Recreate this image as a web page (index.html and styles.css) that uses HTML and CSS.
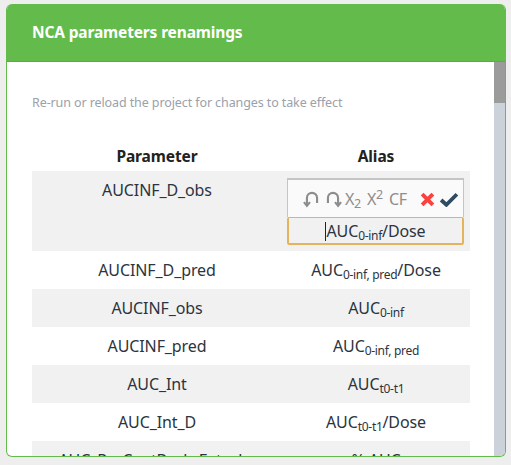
FILE: index.html
```html
<!DOCTYPE html>
<html lang="en">
<head>
<meta charset="utf-8">
<title>NCA parameters renamings</title>
<link rel="stylesheet" href="styles.css">
</head>
<body>
<div class="modal">
  <header class="modal-head"><h1>NCA parameters renamings</h1></header>
  <div class="modal-body">
    <div class="content">
      <p class="hint">Re-run or reload the project for changes to take effect</p>
      <div class="table">
        <div class="row head"><div>Parameter</div><div>Alias</div></div>
        <div class="row odd tall">
          <div>AUCINF_D_obs</div>
          <div class="editor-cell">
            <div class="editor">
              <div class="toolbar">
                <svg class="ic" viewBox="0 0 16 16"><path d="M3.5 14V7a4.5 4.5 0 0 1 9 0v4.5"/><path d="M0.8 10.8 3.5 14l2.7-3.2"/></svg>
                <svg class="ic" viewBox="0 0 16 16"><path d="M12.5 14V7a4.5 4.5 0 0 0-9 0v4.5"/><path d="M15.2 10.8 12.5 14l-2.7-3.2"/></svg>
                <span class="tool">X<sub>2</sub></span>
                <span class="tool">X<sup>2</sup></span>
                <span class="tool cf">CF</span>
                <svg class="x" viewBox="0 0 14 14"><path d="M2 2l10 10M12 2 2 12"/></svg>
                <svg class="check" viewBox="0 0 19 14"><path d="M2 7.5l5 4.5L17 2"/></svg>
              </div>
              <div class="input"><span class="caret"></span>AUC<sub>0-inf</sub>/Dose</div>
            </div>
          </div>
        </div>
        <div class="row"><div>AUCINF_D_pred</div><div>AUC<sub>0-inf, pred</sub>/Dose</div></div>
        <div class="row odd"><div>AUCINF_obs</div><div>AUC<sub>0-inf</sub></div></div>
        <div class="row"><div>AUCINF_pred</div><div>AUC<sub>0-inf, pred</sub></div></div>
        <div class="row odd"><div>AUC_Int</div><div>AUC<sub>t0-t1</sub></div></div>
        <div class="row"><div>AUC_Int_D</div><div>AUC<sub>t0-t1</sub>/Dose</div></div>
        <div class="row odd"><div>AUC_PerCentBack_Ext_obs</div><div>% AUC</div></div>
      </div>
    </div>
    <div class="scrollbar"><div class="thumb"></div></div>
  </div>
</div>
</body>
</html>
```
FILE: styles.css
```css
* { box-sizing: border-box; }
html, body { margin: 0; height: 100%; overflow: hidden; }
body {
  background: #eeeeee;
  padding: 4px 5px 8px 6px;
  font-family: "Noto Sans", "Open Sans", sans-serif;
  color: #2b3440;
}
.modal {
  height: 453px;
  border: 1px solid #62bb4b;
  border-top: 0;
  border-radius: 6px;
  background: #fff;
  display: flex;
  flex-direction: column;
  overflow: hidden;
}
.modal-head {
  height: 58px;
  flex: none;
  background: #62bb4b;
  border-bottom: 1px solid #57ad42;
  display: flex;
  align-items: center;
  padding-left: 26px;
  margin: 0 -1px;
}
.modal-head h1 {
  margin: 0 0 2px;
  font-size: 15.5px;
  font-weight: 700;
  color: #fff;
  letter-spacing: -0.15px;
}
.modal-body { flex: 1; display: flex; min-height: 0; }
.content { flex: 1; min-width: 0; overflow: hidden; padding: 33px 24px 0 25px; }
.hint {
  margin: 0;
  height: 45px;
  font-size: 12.5px;
  line-height: 16px;
  color: #9aa1ab;
  letter-spacing: -0.1px;
}
.table { width: 438px; font-size: 16px; letter-spacing: -0.1px; }
.row {
  display: grid;
  grid-template-columns: 250px 188px;
  height: 38px;
  align-items: center;
  text-align: center;
  white-space: nowrap;
}
.row.head { height: 31px; font-weight: 700; font-size: 15.5px; color: #222; }
.row.odd { background: #f1f1f1; }
.row.tall { height: 80px; align-items: start; padding-top: 7px; }
sub { font-size: 12px; vertical-align: -3px; line-height: 0; letter-spacing: -0.3px; }
sup { font-size: 12px; vertical-align: 6px; line-height: 0; }
.row.tall > div:first-child { padding-top: 1px; }
.editor-cell { padding: 0 6px 0 5px; }
.editor { width: 177px; background: #fafafa; }
.toolbar {
  height: 39px;
  border: 1px solid #c4c4c4;
  border-top-width: 2px;
  border-bottom: 0;
  display: flex;
  align-items: center;
  padding: 1px 0 0 15px;
  color: #8d8d8d;
  font-size: 16px;
}
.ic { width: 18px; height: 18px; fill: none; stroke: #8d8d8d; stroke-width: 1.9; margin-right: 3px; }
.tool { margin: 0 6px 0 0; letter-spacing: -0.3px; }
.tool sub, .tool sup { font-size: 12.5px; }
.tool.cf { margin-right: 13px; font-size: 16px; }
.x { width: 15px; height: 15px; fill: none; stroke: #f8443f; stroke-width: 3.6; margin-right: 4px; }
.check { width: 20px; height: 15px; fill: none; stroke: #2f4a63; stroke-width: 3.6; }
.input {
  height: 28px;
  border: 2px solid #e4b35a;
  border-top-width: 1px;
  border-radius: 2px;
  background: #f1f1f1;
  line-height: 27px;
  text-align: center;
  position: relative;
}
.caret {
  display: inline-block;
  width: 1px;
  height: 19px;
  background: #222;
  vertical-align: -4px;
}
.scrollbar { width: 11px; flex: none; background: #ccd2da; }
.thumb { height: 41px; background: #9b9b9b; }
```
